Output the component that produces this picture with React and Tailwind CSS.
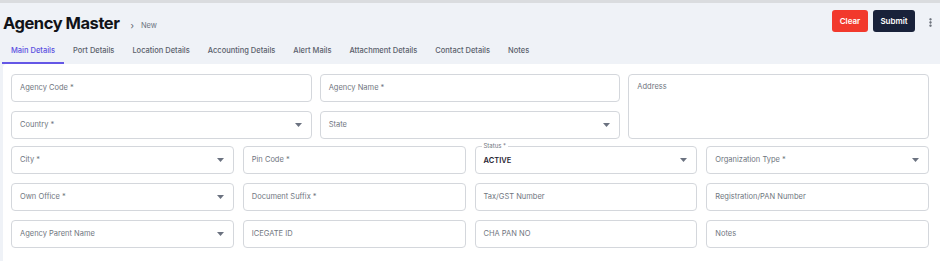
import React from 'react';
import { MoreVertical } from 'lucide-react';

const tabs = ['Main Details', 'Port Details', 'Location Details', 'Accounting Details', 'Alert Mails', 'Attachment Details', 'Contact Details', 'Notes'];

const Caret = () => (
  <svg width="7" height="4" viewBox="0 0 7 4" className="shrink-0">
    <path d="M0 0 L7 0 L3.5 4 Z" fill="#6b7280" />
  </svg>
);

const Field = ({ label, select, className = '' }) => (
  <div className={`h-[28px] border border-[#d4d7dc] rounded-[4px] bg-white flex items-center justify-between pl-2 pr-[9px] ${className}`}>
    <span className="text-[7.5px] text-[#6f7680]">{label}</span>
    {select && <Caret />}
  </div>
);

const StatusField = () => (
  <div className="relative h-[28px] border border-[#d4d7dc] rounded-[4px] bg-white flex items-center justify-between pl-2 pr-[9px]">
    <span className="absolute -top-[5px] left-[6px] bg-white px-[2px] text-[6px] leading-[8px] text-[#6f7680]">Status *</span>
    <span className="text-[7.5px] font-semibold text-[#1f2430] mt-[2px]">ACTIVE</span>
    <Caret />
  </div>
);

export default function App() {
  return (
    <div className="w-[940px] h-[261px] overflow-hidden bg-[#eff2f7] border-t-[3px] border-[#dadcdf]" style={{ fontFamily: 'Inter, "Liberation Sans", sans-serif' }}>
      {/* Header */}
      <div className="relative h-[61px]">
        <div className="flex items-end pl-[3px] pt-[10px]">
          <h1 className="text-[16.5px] leading-[20px] font-bold tracking-[-0.45px] text-[#111318]">Agency Master</h1>
          <span className="ml-[11px] mb-[1px] text-[9px] text-[#555b65]">›</span>
          <span className="ml-[7px] mb-[2px] text-[7.5px] text-[#6b7280]">New</span>
        </div>
        <div className="absolute top-[7px] right-[25px] flex gap-[5px]">
          <button className="h-[22px] w-[36px] rounded-[3px] bg-[#f2392c] text-white text-[8px] font-semibold">Clear</button>
          <button className="h-[22px] w-[42px] rounded-[3px] bg-[#19223a] text-white text-[8px] font-semibold">Submit</button>
        </div>
        <div className="absolute top-[14px] right-[4px] text-[#555b65]">
          <MoreVertical size={11} strokeWidth={3} />
        </div>
        <div className="absolute bottom-0 left-[2px] flex">
          {tabs.map((t, i) => (
            <div
              key={t}
              className={`h-[22px] flex items-start pt-[3px] px-[9px] text-[7.5px] font-medium ${i === 0 ? 'border-b-2 border-[#6457e6] text-[#5a4ee0]' : 'text-[#5a606b]'}`}
            >
              {t}
            </div>
          ))}
        </div>
      </div>

      {/* Form card */}
      <div className="ml-[3px] bg-white rounded-tl-[4px] pl-[8px] pr-[11px] pt-[10px] h-[200px]">
        <div className="grid grid-cols-3 gap-x-2 gap-y-[9px]">
          <Field label="Agency Code *" />
          <Field label="Agency Name *" />
          <div className="row-span-2 border border-[#d4d7dc] rounded-[4px] px-2 pt-[6px] h-[65px]">
            <div className="text-[7.5px] leading-[12px] text-[#6f7680]">Address</div>
          </div>
          <Field label="Country *" select />
          <Field label="State" select />
        </div>
        <div className="grid grid-cols-4 gap-x-[9px] gap-y-[9px] mt-[7px]">
          <Field label="City *" select />
          <Field label="Pin Code *" />
          <StatusField />
          <Field label="Organization Type *" select />
          <Field label="Own Office *" select />
          <Field label="Document Suffix *" />
          <Field label="Tax/GST Number" />
          <Field label="Registration/PAN Number" />
          <Field label="Agency Parent Name" select />
          <Field label="ICEGATE ID" />
          <Field label="CHA PAN NO" />
          <Field label="Notes" />
        </div>
      </div>
    </div>
  );
}
